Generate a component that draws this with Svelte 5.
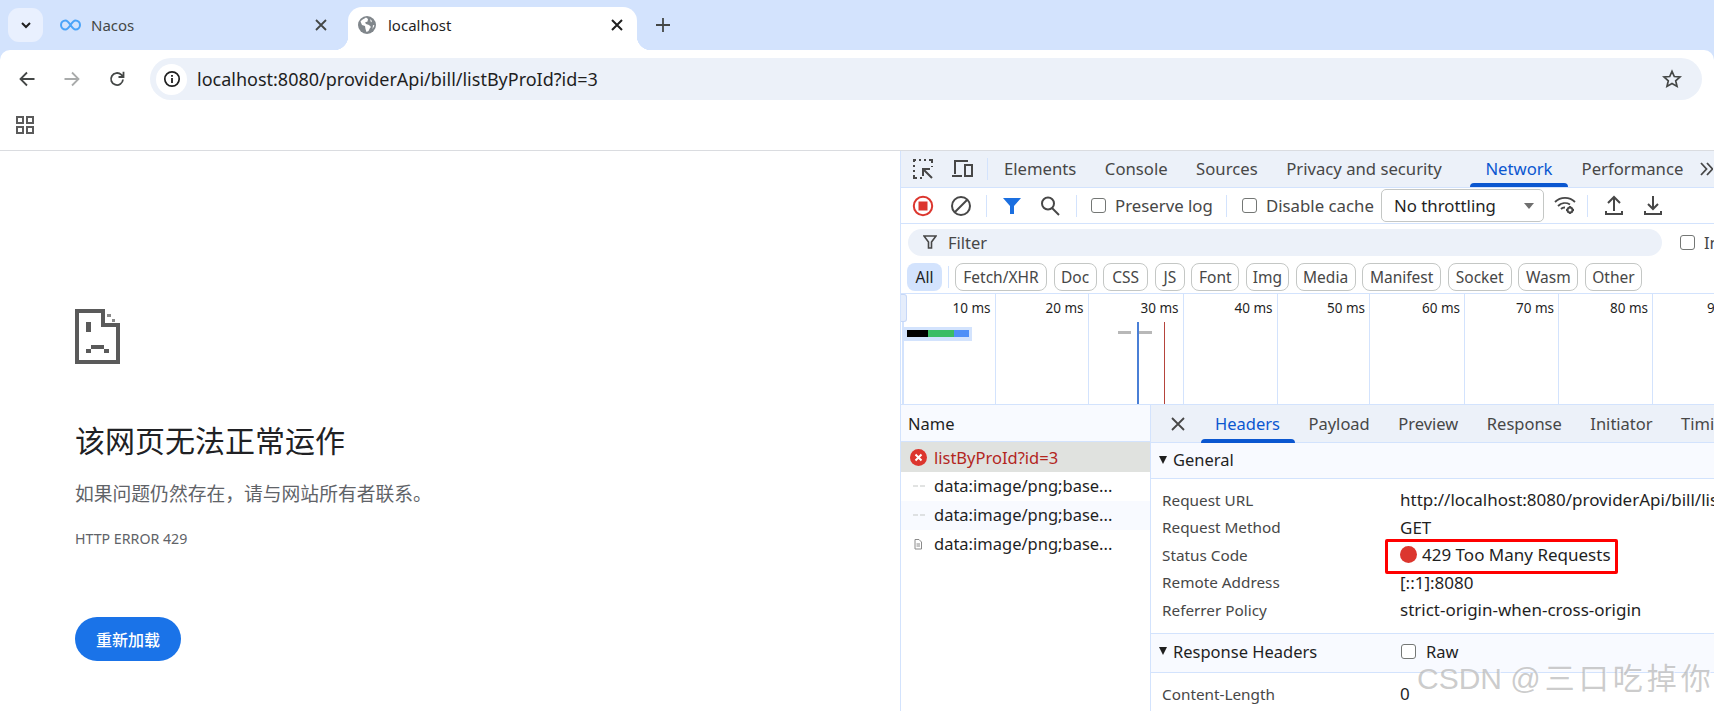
<script>
  const chips = [
    ['Fetch/XHR', 92], ['Doc', 43], ['CSS', 45], ['JS', 30], ['Font', 48], ['Img', 43],
    ['Media', 60], ['Manifest', 79], ['Socket', 64], ['Wasm', 60], ['Other', 57]
  ];
  const ticks = [
    ['10 ms', 94.5], ['20 ms', 93], ['30 ms', 95], ['40 ms', 94], ['50 ms', 92.5],
    ['60 ms', 95], ['70 ms', 94], ['80 ms', 94], ['90 ms', 97]
  ];
  const devTabs = ['Elements', 'Console', 'Sources', 'Privacy and security', 'Network', 'Performance'];
  const detailTabs = ['Headers', 'Payload', 'Preview', 'Response', 'Initiator', 'Timing'];
  const general = [
    ['Request URL', 'http://localhost:8080/providerApi/bill/listByProId?id=3'],
    ['Request Method', 'GET'],
    ['Status Code', '429 Too Many Requests'],
    ['Remote Address', '[::1]:8080'],
    ['Referrer Policy', 'strict-origin-when-cross-origin']
  ];
</script>

<div class="app">
  <header class="strip">
    <button class="tabsearch" aria-label="Tab search">
      <svg width="14" height="14" viewBox="0 0 14 14"><path d="M3 5l4 4 4-4" fill="none" stroke="#1f1f1f" stroke-width="2"/></svg>
    </button>
    <div class="tab inactive">
      <svg class="fav" width="21" height="12" viewBox="0 0 21 12"><path d="M10.5 6C8.5 3 7.5 1.5 5.5 1.5a4.5 4.5 0 0 0 0 9c2 0 3-1.5 5-4.500s3-4.500 5-4.500a4.500 4.500 0 0 1 0 9c-2 0-3-1.500-5-4.500z" fill="none" stroke="#4aa3f8" stroke-width="2"/></svg>
      <span class="tabtitle muted">Nacos</span>
      <svg class="x" width="14" height="14" viewBox="0 0 14 14"><path d="M2 2l10 10M12 2L2 12" stroke="#444746" stroke-width="1.800"/></svg>
    </div>
    <div class="tab active">
      <svg class="globe" width="18" height="18" viewBox="0 0 18 18"><circle cx="9" cy="9" r="9" fill="#80868b"/><path d="M8 1.500C6 3 4 3.500 2.500 5.500L4 9l3 1 .500 3 1 3 2-1 1.500-3 1-1-2-2-3-1-1-1.500 2.500-1L10 3zM12 3l2 2-1 1.500zM15 9l1.500.500-2 3.500z" fill="#fff"/></svg>
      <span class="tabtitle">localhost</span>
      <svg class="x" width="14" height="14" viewBox="0 0 14 14"><path d="M2 2l10 10M12 2L2 12" stroke="#1f1f1f" stroke-width="2"/></svg>
    </div>
    <svg class="plus" width="14" height="14" viewBox="0 0 14 14"><path d="M7 0v14M0 7h14" stroke="#444746" stroke-width="1.800"/></svg>
  </header>

  <div class="navbar">
    <svg class="nav" width="18" height="18" viewBox="0 0 18 18"><path d="M16.500 9H2.500M9 2.500L2.500 9 9 15.500" fill="none" stroke="#444746" stroke-width="1.800"/></svg>
    <svg class="nav" width="18" height="18" viewBox="0 0 18 18"><path d="M1.500 9h14M9 2.500L15.500 9 9 15.500" fill="none" stroke="#a9abab" stroke-width="1.800"/></svg>
    <svg class="nav" width="18" height="18" viewBox="0 0 18 18"><path d="M15 9.500a6 6 0 1 1-1.800-4.800L15.500 7M15.500 1.800V7h-5" fill="none" stroke="#444746" stroke-width="1.800"/></svg>
    <div class="omnibox">
      <span class="chip-info">
        <svg width="18" height="18" viewBox="0 0 18 18"><circle cx="9" cy="9" r="7.200" fill="none" stroke="#1f1f1f" stroke-width="1.700"/><path d="M9 8v5M9 5v1.800" stroke="#1f1f1f" stroke-width="1.800"/></svg>
      </span>
      <span class="url">localhost:8080/providerApi/bill/listByProId?id=3</span>
      <svg class="star" width="20" height="20" viewBox="0 0 20 20"><path d="M10 2.300l2.300 5.200 5.700.500-4.300 3.800 1.300 5.600L10 14.500l-5 2.900 1.300-5.600L2 8l5.700-.500z" fill="none" stroke="#444746" stroke-width="1.700"/></svg>
    </div>
  </div>

  <div class="bookmarks">
    <svg width="18" height="18" viewBox="0 0 18 18" fill="none" stroke="#5b5b5b" stroke-width="2"><rect x="1" y="1" width="6" height="6"/><rect x="11" y="1" width="6" height="6"/><rect x="1" y="11" width="6" height="6"/><rect x="11" y="11" width="6" height="6"/></svg>
  </div>

  <div class="main">
    <main class="page">
      <svg class="sad" width="45" height="55" viewBox="0 0 45 55" shape-rendering="crispEdges">
        <path fill="#5a5a5a" d="M0 0h30v4H4v47h37V18H26V4h4v10h15v41H0z"/>
        <path fill="#8a8a8a" d="M32 5h4v3h-4zM37 10h3v3h-3z"/>
        <path fill="#5a5a5a" d="M11 13h5v10h-5zM11 40h5v4h-5zM16 36h13v4H16zM29 40h5v4h-5z"/>
      </svg>
      <h1>该网页无法正常运作</h1>
      <p class="desc">如果问题仍然存在，请与网站所有者联系。</p>
      <p class="code">HTTP ERROR 429</p>
      <button class="reload">重新加载</button>
    </main>

    <section class="devtools">
      <div class="dtabs">
        <svg class="ico first" width="22" height="22" viewBox="0 0 22 22" fill="none" stroke="#474747" stroke-width="2"><path d="M2 4V2h2M7 2h2M12 2h2M17 2h3v3M2 7v2M2 12v2M2 17v3h3M8 20h2M20 8v1"/><path d="M20 20L11 11M11 18v-7h7" /></svg>
        <svg class="ico second" width="22" height="20" viewBox="0 0 22 20" fill="none" stroke="#474747" stroke-width="2"><path d="M3 15V2h13M0 17h10"/><rect x="13" y="6" width="7" height="11"/></svg>
        <i class="vsep"></i>
        <nav class="dtab-row">
          {#each devTabs as t}
            <span class:sel={t === 'Network'} class="dtab">{t}</span>
          {/each}
        </nav>
        <svg class="more" width="13" height="14" viewBox="0 0 13 14" fill="none" stroke="#474747" stroke-width="1.800"><path d="M1 1l5.500 6L1 13M7 1l5.500 6L7 13"/></svg>
      </div>

      <div class="tools">
        <svg class="record" width="22" height="22" viewBox="0 0 22 22"><circle cx="11" cy="11" r="9.200" fill="none" stroke="#dc362e" stroke-width="2"/><rect x="6.500" y="6.500" width="9" height="9" fill="#dc362e"/></svg>
        <svg class="clear" width="22" height="22" viewBox="0 0 22 22" fill="none" stroke="#474747" stroke-width="2"><circle cx="11" cy="11" r="9"/><path d="M5 17L17 5"/></svg>
        <i class="vsep s1"></i>
        <svg class="funnel" width="18" height="18" viewBox="0 0 18 18"><path d="M0 1h18l-7 8v8H7V9z" fill="#1b6fe0"/></svg>
        <svg class="search" width="22" height="22" viewBox="0 0 22 22" fill="none" stroke="#474747" stroke-width="2"><circle cx="9" cy="8.500" r="6"/><path d="M13 13l7 7"/></svg>
        <i class="vsep s2"></i>
        <label class="check c1"><i class="box"></i>Preserve log</label>
        <i class="vsep s3"></i>
        <label class="check c2"><i class="box"></i>Disable cache</label>
        <div class="select"><span>No throttling</span><i class="caret"></i></div>
        <svg class="wifi" width="22" height="20" viewBox="0 0 22 20" fill="none" stroke="#474747" stroke-width="1.800"><path d="M1 6a14 14 0 0 1 20 0M4 10a10 10 0 0 1 12-1.500M7 13a5 5 0 0 1 4-1.500"/><circle cx="16" cy="14" r="2.500" stroke-width="2"/><path d="M16 10v1.500M16 16.500V18M12 14h1.500M18.500 14H20" /></svg>
        <i class="vsep s4"></i>
        <svg class="up" width="20" height="22" viewBox="0 0 20 22" fill="none" stroke="#474747" stroke-width="2"><path d="M10 16V2M4 8l6-6 6 6M2 16v3h16v-3"/></svg>
        <svg class="down" width="20" height="22" viewBox="0 0 20 22" fill="none" stroke="#474747" stroke-width="2"><path d="M10 1v13M5 9l5 5 5-5M2 16v3h16v-3"/></svg>
      </div>

      <div class="filterrow">
        <div class="filterbox">
          <svg width="14" height="14" viewBox="0 0 14 14" fill="none" stroke="#474747" stroke-width="1.600"><path d="M1 1h12L8.500 7v6h-3V7z"/></svg>
          <span>Filter</span>
        </div>
        <i class="box inv"></i><span class="inv-text">Invert</span>
      </div>

      <div class="chiprow">
        <span class="all">All</span>
        <i class="vsep cs"></i>
        {#each chips as [c, w]}
          <span class="tchip" style="width:{w}px">{c}</span>
        {/each}
      </div>

      <div class="overview">
        <div class="grid">
          {#each ticks as [t, w]}
            <div class="cell" style="width:{w}px"><span>{t}</span></div>
          {/each}
        </div>
        <i class="leftline"></i>
        <i class="handle"></i>
        <div class="halo"><b class="k"></b><b class="g"></b><b class="bl"></b></div>
        <i class="dash d1"></i><i class="dash d2"></i>
        <i class="vline blue"></i><i class="vline red"></i>
      </div>

      <div class="split">
        <div class="names">
          <div class="nhead">Name</div>
          <div class="row err">
            <svg width="17" height="17" viewBox="0 0 17 17"><circle cx="8.500" cy="8.500" r="8.500" fill="#dc362e"/><path d="M5.500 5.500l6 6M11.500 5.500l-6 6" stroke="#fff" stroke-width="2"/></svg>
            <span>listByProId?id=3</span>
          </div>
          <div class="row"><svg width="17" height="17" viewBox="0 0 17 17"><path d="M3 9h5M10 9h5" stroke="#c4c7c5" stroke-width="1"/></svg><span>data:image/png;base...</span></div>
          <div class="row alt"><svg width="17" height="17" viewBox="0 0 17 17"><path d="M3 9h5M10 9h5" stroke="#c4c7c5" stroke-width="1"/></svg><span>data:image/png;base...</span></div>
          <div class="row"><svg width="17" height="17" viewBox="0 0 17 17" fill="none" stroke="#8a8a8a"><path d="M5 4.500h4l2.500 2.500v7H5zM6.500 9h3.500M6.500 11h3.500"/></svg><span>data:image/png;base...</span></div>
        </div>
        <div class="details">
          <div class="dhead">
            <svg class="close" width="14" height="14" viewBox="0 0 14 14"><path d="M1 1l12 12M13 1L1 13" stroke="#474747" stroke-width="1.800"/></svg>
            {#each detailTabs as t}
              <span class="dt" class:on={t === 'Headers'}>{t}</span>
            {/each}
          </div>
          <div class="sect"><i class="tri"></i>General</div>
          <div class="kv">
            {#each general as [k, v]}
              <div class="k-name">{k}</div>
              <div class="k-val">
                {#if k === 'Status Code'}<i class="dot"></i>{/if}{v}
              </div>
            {/each}
          </div>
          <div class="sect resp"><i class="tri"></i><span class="rh">Response Headers</span><i class="box"></i><span class="raw">Raw</span></div>
          <div class="kv last">
            <div class="k-name">Content-Length</div>
            <div class="k-val">0</div>
          </div>
          <i class="redbox"></i>
        </div>
      </div>
    </section>
  </div>

  <div class="watermark">CSDN <span>@三口吃掉你</span></div>
</div>

<style>
  :global(body) { margin: 0; background: #fff; }
  .app {
    position: relative;
    width: 1714px;
    height: 711px;
    overflow: hidden;
    font-family: "Noto Sans", "Noto Sans CJK SC", sans-serif;
    color: #1f1f1f;
    background: #d3e3fd;
  }
  i, b { display: block; font-style: normal; }
  .strip { height: 50px; display: flex; align-items: flex-start; }
  .tabsearch {
    width: 35px; height: 34px; margin: 8px 0 0 8px; border: 0; padding: 0;
    border-radius: 11px; background: #e9f0fe;
    display: flex; align-items: center; justify-content: center;
  }
  .tab { height: 43px; margin-top: 7px; display: flex; align-items: center; padding-bottom: 7px; box-sizing: border-box; }
  .tab.inactive { width: 305px; padding-left: 17px; }
  .tab.active { width: 289px; padding-left: 10px; background: #fff; border-radius: 14px 14px 0 0; position: relative; }
  .tab.active::before, .tab.active::after {
    content: ""; position: absolute; bottom: 0; width: 14px; height: 14px;
    background: radial-gradient(circle at var(--cx) 0, #d3e3fd 14px, #fff 14.500px);
  }
  .tab.active::before { left: -14px; --cx: 0; }
  .tab.active::after { right: -14px; --cx: 14px; }
  .fav { flex: none; }
  .globe { flex: none; }
  .tabtitle { margin-left: 10px; font-size: 15px; flex: 1; }
  .tab.active .tabtitle { margin-left: 12px; font-size: 15px; }
  .muted { color: #444746; }
  .x { margin-right: 20px; flex: none; }
  .tab.active .x { margin-right: 13px; }
  .plus { margin: 18px 0 0 19px; }

  .navbar {
    height: 58px; background: #fff; border-radius: 10px 10px 0 0;
    display: flex; align-items: flex-start; padding: 8px 12px 0 18px; box-sizing: border-box;
    position: relative;
  }
  .nav { margin-top: 12px; margin-right: 27px; flex: none; }
  .nav:nth-child(3) { margin-right: 24px; }
  .omnibox {
    flex: 1; height: 42px; margin-left: 0; border-radius: 21px; background: #ecf1f9;
    display: flex; align-items: center; padding-left: 6px;
  }
  .chip-info {
    width: 31px; height: 31px; border-radius: 50%; background: #fff;
    display: flex; align-items: center; justify-content: center; flex: none;
  }
  .url { margin-left: 10px; font-size: 18px; flex: 1; color: #1f1f1f; }
  .star { margin-right: 20px; }
  .bookmarks {
    background: #fff; border-bottom: 1px solid #dadce0; box-sizing: content-box;
    padding: 8px 0 0 16px; height: 34px;
  }
  .bookmarks svg { display: block; }

  .main { display: flex; background: #fff; height: 560px; }
  .page { width: 900px; flex: none; padding: 158px 0 0 75px; box-sizing: border-box; }
  .sad { display: block; }
  h1 { margin: 57px 0 0; font-size: 30px; line-height: 40px; font-weight: 400; color: #202124; }
  .desc { margin: 20px 0 0; font-size: 18.800px; line-height: 26px; color: #5f6368; }
  .code { margin: 22px 0 0; font-size: 14.200px; line-height: 20px; color: #5f6368; }
  .reload {
    display: block; margin-top: 68px; width: 106px; height: 44px; border: 0; border-radius: 22px;
    background: #1a73e8; color: #fff; font: 500 16px "Noto Sans CJK SC", sans-serif; padding: 0;
  }

  .devtools { width: 814px; flex: none; border-left: 1px solid #d3e3fd; box-sizing: border-box; font-size: 16.500px; color: #1f1f1f; }
  .dtabs { height: 36px; background: #ecf1f9; border-bottom: 1px solid #d3e3fd; display: flex; align-items: center; position: relative; box-sizing: content-box; font-size: 16.700px; }
  .ico { flex: none; }
  .first { margin-left: 11px; }
  .second { margin-left: 18px; }
  .vsep { width: 1px; height: 22px; background: #d3e3fd; flex: none; }
  .dtabs .vsep { margin-left: 13px; }
  .dtab-row { display: flex; flex: none; height: 100%; margin-left: 16px; }
  .dtab { padding: 0 14.500px 2px 0; display: flex; align-items: center; position: relative; color: #474747; margin-right: 14px; white-space: nowrap; }
  .dtab:last-child { margin-right: 0; padding-right: 0; }
  .dtab.sel { color: #0b57d0; margin-left: 15px; margin-right: 29px; padding-right: 0; }
  .dtab.sel::after { content: ""; position: absolute; left: -15px; right: -15px; bottom: 0; height: 4px; background: #0b57d0; border-radius: 4px 4px 0 0; }
  .more { margin-left: auto; margin-right: 1px; flex: none; }

  .tools { height: 35px; background: #fff; border-bottom: 1px solid #d3e3fd; display: flex; align-items: center; font-size: 16.800px; }
  .tools svg { flex: none; }
  .record { margin-left: 11px; }
  .clear { margin-left: 16px; }
  .s1 { margin-left: 14px; }
  .funnel { margin-left: 16px; }
  .search { margin-left: 18px; }
  .s2 { margin-left: 15px; }
  .check { display: flex; align-items: center; white-space: nowrap; color: #474747; }
  .c1 { margin-left: 14px; width: 135px; }
  .c2 { margin-left: 15px; width: 138px; }
  .box { width: 13px; height: 13px; border: 1.500px solid #747775; border-radius: 3px; flex: none; background: #fff; }
  .check .box { margin-right: 9px; }
  .select {
    width: 163px; height: 33px; border: 1px solid #c4c7c5; border-radius: 5px; box-sizing: border-box;
    display: flex; align-items: center; justify-content: space-between; padding: 0 8px 0 12px; color: #1f1f1f;
    margin-left: 1px; background: #fff; flex: none;
  }
  .caret { width: 0; height: 0; border-left: 5px solid transparent; border-right: 5px solid transparent; border-top: 6px solid #6f6f6f; margin-right: 1px; }
  .wifi { margin-left: 10px; }
  .s4 { margin-left: 11px; }
  .up { margin-left: 16px; }
  .down { margin-left: 19px; }

  .filterrow { height: 39px; display: flex; align-items: center; padding: 0 0 3px 7px; box-sizing: border-box; overflow: hidden; }
  .filterbox {
    width: 754px; flex: none; height: 27px; border-radius: 14px; background: #ecf1f9; display: flex; align-items: center; padding-left: 15px; box-sizing: border-box; color: #474747;
  }
  .filterbox span { margin-left: 11px; }
  .inv { margin-left: 18px; }
  .inv-text { margin-left: 9px; white-space: nowrap; color: #474747; }

  .chiprow { display: flex; align-items: flex-start; padding-left: 6px; border-bottom: 1px solid #d3e3fd; box-sizing: content-box; height: 30px; font-size: 15.500px; }
  .all { width: 35px; height: 28px; background: #d3e3fd; border-radius: 8px; display: flex; align-items: center; justify-content: center; color: #1f1f1f; }
  .cs { margin: 3px 6px 0 6px; }
  .tchip {
    height: 28px; box-sizing: border-box; border: 1px solid #c4c7c5; border-radius: 8px;
    display: flex; align-items: center; justify-content: center; margin-right: 6.600px; color: #474747; flex: none; white-space: nowrap;
  }

  .overview { position: relative; border-bottom: 1px solid #d3e3fd; box-sizing: content-box; height: 110px; overflow: hidden; }
  .grid { display: flex; height: 100%; }
  .cell { flex: none; box-sizing: border-box; border-right: 1px solid #d3e3fd; text-align: right; padding: 3px 4px 0 0; font-size: 13.500px; line-height: 22px; color: #1f1f1f; white-space: nowrap; }
  .leftline { position: absolute; left: 1px; top: 0; bottom: 0; width: 2px; background: #d3e3fd; }
  .handle { position: absolute; left: 0; top: 0; width: 6px; height: 28px; background: #e5edfb; border: 1px solid #c6d7f7; border-left: 0; border-radius: 0 3px 3px 0; box-sizing: border-box; }
  .halo { position: absolute; left: 2px; top: 33px; width: 69px; height: 14px; background: #d3e3fd; display: flex; padding: 3px 3px 4px 4px; box-sizing: border-box; }
  .k { width: 21px; background: #000; }
  .g { width: 26px; background: #3bbd64; }
  .bl { width: 15px; background: #4f8ff7; }
  .dash { position: absolute; top: 37px; width: 13px; height: 3px; background: #b8b8b8; }
  .d1 { left: 217px; }
  .d2 { left: 238px; }
  .vline { position: absolute; top: 28px; bottom: 0; width: 1px; }
  .blue { left: 236px; width: 2px; background: #4a7fd6; }
  .red { left: 263px; background: #b5443c; }

  .split { display: flex; height: 306px; }
  .names { width: 250px; flex: none; border-right: 1px solid #d3e3fd; box-sizing: border-box; background: #fff; }
  .nhead { height: 37px; padding: 0 0 0 7px; box-sizing: border-box; display: flex; align-items: center; background: #f8faff; border-bottom: 1px solid #d3e3fd; }
  .row { height: 29px; box-sizing: border-box; display: flex; align-items: center; padding: 0 0 2px 9px; white-space: nowrap; }
  .row span { margin-left: 7px; }
  .row.err { height: 30px; padding-bottom: 0; background: #e0e2df; color: #b3261e; }
  .row.alt { background: #f8faff; }
  .details { flex: 1; min-width: 0; position: relative; overflow: hidden; }
  .dhead { height: 38px; background: #ecf1f9; border-bottom: 1px solid #d3e3fd; box-sizing: border-box; display: flex; align-items: center; position: relative; white-space: nowrap; }
  .close { margin-left: 20px; flex: none; }
  .dt { margin-left: 28.500px; position: relative; color: #474747; }
  .close + .dt { margin-left: 30px; }
  .dt.on { color: #0b57d0; }
  .dt.on::after { content: ""; position: absolute; left: -14px; right: -15px; bottom: -8px; height: 4px; background: #0b57d0; border-radius: 4px 4px 0 0; }
  .sect { height: 36px; background: #f8faff; border-bottom: 1px solid #d3e3fd; display: flex; align-items: center; padding: 0 0 2px 8px; box-sizing: border-box; color: #1f1f1f; }
  .tri { width: 0; height: 0; border-left: 4.500px solid transparent; border-right: 4.500px solid transparent; border-top: 8px solid #1f1f1f; margin-right: 6px; }
  .kv { display: grid; grid-template-columns: 238px 1fr; padding: 7px 0 0 11px; grid-auto-rows: 27.500px; align-items: center; height: 155px; box-sizing: border-box; border-bottom: 1px solid #d3e3fd; }
  .k-name { font-size: 15.300px; color: #474747; white-space: nowrap; }
  .k-val { font-size: 17px; white-space: nowrap; display: flex; align-items: center; color: #1f1f1f; }
  .dot { width: 17px; height: 17px; border-radius: 50%; background: #dc362e; margin-right: 5px; }
  .kv.last { height: auto; border: 0; padding-top: 7px; }
  .sect.resp { height: 39px; padding-bottom: 4px; }
  .rh { width: 228px; white-space: nowrap; }
  .raw { margin-left: 10px; }
  .redbox { position: absolute; left: 234px; top: 134px; width: 233px; height: 35px; box-sizing: border-box; border: 3px solid #f00; border-radius: 2px; }
  .watermark {
    position: absolute; left: 1417px; top: 661px; font-size: 30px; line-height: 36px; white-space: nowrap;
    color: rgba(170, 170, 170, .6); text-shadow: 1px 1px 0 rgba(255,255,255,.8);
    font-family: "Liberation Sans", "Noto Sans CJK SC", sans-serif;
  }
  .watermark span { letter-spacing: 4px; }
</style>
